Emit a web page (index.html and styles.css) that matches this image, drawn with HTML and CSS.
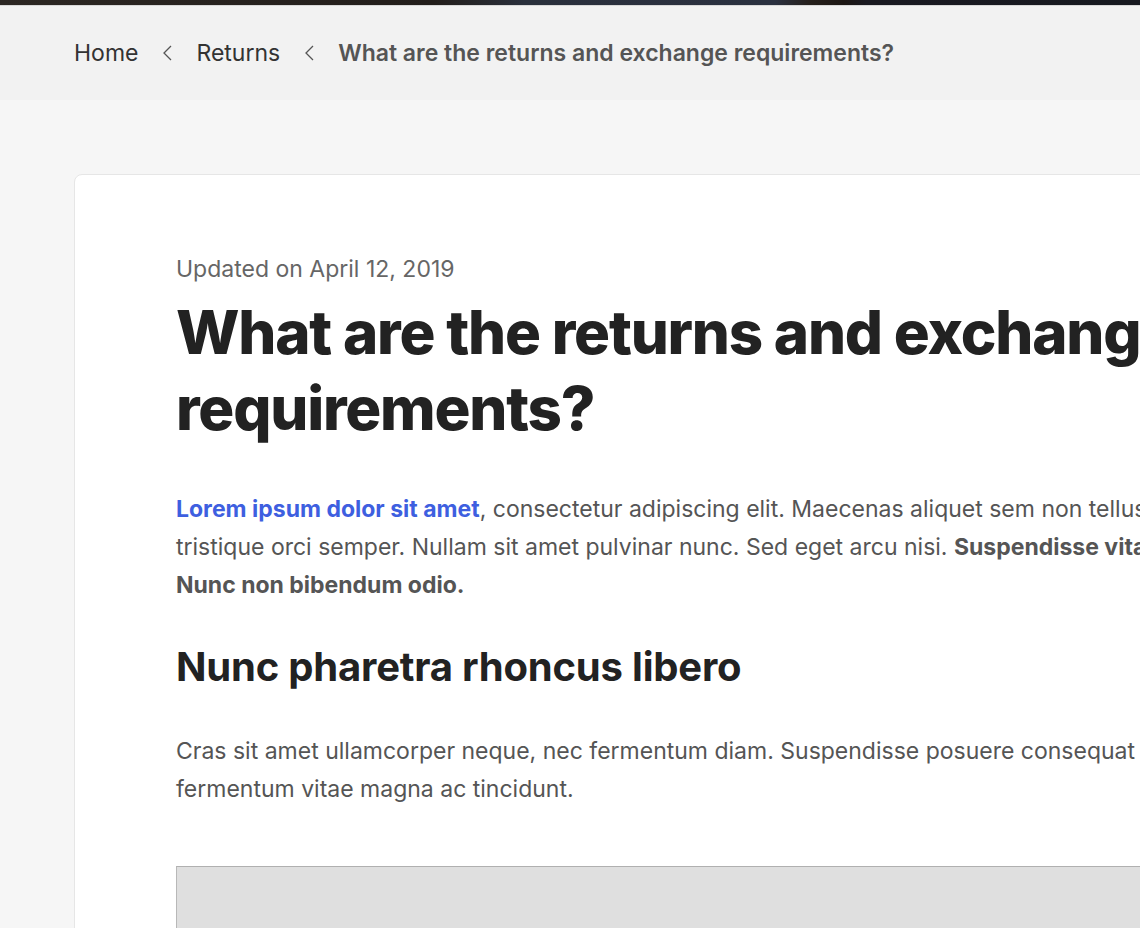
FILE: index.html
```html
<!DOCTYPE html>
<html lang="en">
<head>
<meta charset="utf-8">
<title>What are the returns and exchange requirements?</title>
<link rel="stylesheet" href="styles.css">
</head>
<body>
<div class="hero-strip"></div>
<nav class="crumbs">
  <a class="crumb" href="#">Home</a>
  <svg class="chev" viewBox="0 0 10 16" width="10" height="16"><polyline points="9,1 2,8 9,15"/></svg>
  <a class="crumb" href="#">Returns</a>
  <svg class="chev" viewBox="0 0 10 16" width="10" height="16"><polyline points="9,1 2,8 9,15"/></svg>
  <span class="crumb current">What are the returns and exchange requirements?</span>
</nav>
<main class="page">
  <article class="card">
    <p class="updated">Updated on April 12, 2019</p>
    <h1 class="title">What are the returns and exchange requirements?</h1>
    <p class="body-text lead"><a class="link" href="#">Lorem ipsum dolor sit amet</a>, consectetur adipiscing elit. Maecenas aliquet sem non tellus tristique orci semper. Nullam sit amet pulvinar nunc. Sed eget arcu nisi. <strong>Suspendisse vitae. Nunc non bibendum odio.</strong></p>
    <h2 class="subtitle">Nunc pharetra rhoncus libero</h2>
    <p class="body-text second">Cras sit amet ullamcorper neque, nec fermentum diam. Suspendisse posuere consequat fermentum vitae magna ac tincidunt.</p>
    <div class="media"></div>
  </article>
</main>
</body>
</html>
```

FILE: styles.css
```css
html, body {
  margin: 0;
  padding: 0;
}
body {
  background: #f6f6f6;
  font-family: "Inter", "Noto Sans", sans-serif;
  overflow: hidden;
  height: 928px;
}
.hero-strip {
  height: 6px;
  background: linear-gradient(90deg, #2c2723 0%, #231e1b 38%, #27292f 43%, #2a303c 46%, #2b3140 68%, #26201c 71%, #1d1714 74%, #1a1a21 76%, #171920 100%);
  border-bottom: 1px solid #d8d8d8;
  box-sizing: border-box;
}
.crumbs {
  height: 94px;
  background: #f2f2f2;
  display: flex;
  align-items: center;
  gap: 24px;
  padding-left: 74px;
  font-size: 23px;
}
.crumb {
  color: #333;
  text-decoration: none;
}
.crumb.current {
  color: #555;
  font-weight: 600;
}
.chev {
  fill: none;
  stroke: #555;
  stroke-width: 1.3;
}
.page {
  padding: 74px 0 0 74px;
}
.card {
  width: 1004px;
  background: #fff;
  border: 1px solid #e6e6e6;
  border-radius: 8px;
  padding: 79px 102px 80px 101px;
}
.updated {
  margin: 0;
  font-size: 23px;
  line-height: 30px;
  color: #666;
}
.title {
  margin: 10px 0 0;
  font-size: 60px;
  line-height: 76px;
  font-weight: 800;
  color: #222;
  letter-spacing: -1.2px;
}
.body-text {
  font-size: 23px;
  line-height: 38px;
  color: #555;
}
.lead {
  margin: 44px 0 0;
}
.link {
  color: #3e5fe0;
  font-weight: 700;
  text-decoration: none;
}
.body-text strong {
  font-weight: 700;
}
.subtitle {
  margin: 38px 0 0;
  font-size: 40px;
  line-height: 50px;
  font-weight: 700;
  color: #222;
  letter-spacing: -0.2px;
}
.second {
  margin: 40px 0 0;
}
.media {
  margin-top: 58px;
  height: 300px;
  background: #dfdfdf;
  border-top: 1px solid #b0b0b0;
  border-left: 1px solid #b8b8b8;
}
```
